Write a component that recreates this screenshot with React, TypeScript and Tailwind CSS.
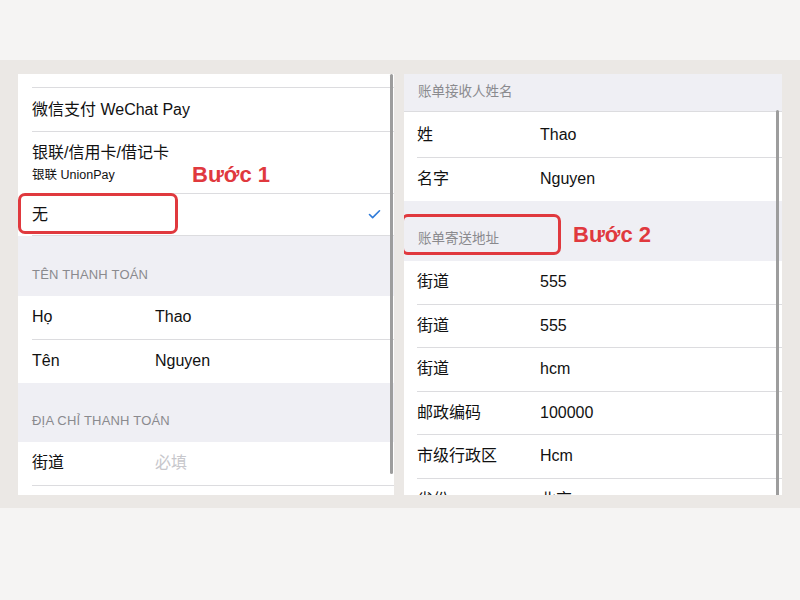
import { Check } from 'lucide-react';

const font = { fontFamily: '"Liberation Sans", "Noto Sans CJK SC", Arial, sans-serif' };

function Row({ label, value, placeholder, inset = 'pl-[14px]', valueCol = 'w-[123px]', last = false }: any) {
  return (
    <div className={`${inset} bg-white`}>
      <div className={`h-[43.5px] flex items-center text-[16px] text-[#111] ${last ? '' : 'border-b border-[#dcdcdf]'}`}>
        <span className={`${valueCol} shrink-0`}>{label}</span>
        <span className={placeholder ? 'text-[#c7c7cc]' : ''}>{value}</span>
      </div>
    </div>
  );
}

function GroupHeader({ text, h = 'h-[61px]', upper = false }: any) {
  return (
    <div className={`${h} bg-[#efeff4] flex items-end pb-[12px] px-[14px] text-[#8a8a8e] ${upper ? 'text-[13px] tracking-[0.2px]' : 'text-[13.5px]'}`}>
      {text}
    </div>
  );
}

function Step({ text, className }: { text: string; className: string }) {
  return (
    <div className={`absolute text-[22px] leading-none font-bold text-[#e0393e] ${className}`}>{text}</div>
  );
}

export default function App() {
  return (
    <div className="w-[800px] h-[600px] bg-[#f5f4f3] flex flex-col" style={font}>
      <div className="h-[60px]" />
      <div className="h-[448px] bg-[#ebe8e5] flex pt-[14px] pl-[18px] gap-[10px]">
        {/* Left panel */}
        <div className="relative w-[376px] h-[421px] bg-white overflow-hidden">
          <div className="h-[13px] bg-white" />
          <div className="pl-[14px]">
            <div className="border-t border-[#dcdcdf]" />
          </div>
          <div className="pl-[14px]">
            <div className="h-[44px] flex items-center text-[16px] text-[#111] border-b border-[#dcdcdf]">
              微信支付 WeChat Pay
            </div>
          </div>
          <div className="pl-[14px]">
            <div className="h-[62px] flex flex-col justify-center text-[#111] border-b border-[#dcdcdf]">
              <div className="text-[16px] leading-[22px]">银联/信用卡/借记卡</div>
              <div className="text-[12.5px] leading-[18px] mt-[2px]">银联 UnionPay</div>
            </div>
          </div>
          <div className="pl-[14px]">
            <div className="h-[42px] flex items-center justify-between pr-[12px] text-[16px] text-[#111] border-b border-[#dcdcdf]">
              <span>无</span>
              <Check size={15} strokeWidth={2.6} className="text-[#2f7bd9]" />
            </div>
          </div>
          <GroupHeader text="TÊN THANH TOÁN" h="h-[60px]" upper />
          <Row label="Họ" value="Thao" />
          <Row label="Tên" value="Nguyen" last />
          <GroupHeader text="ĐỊA CHỈ THANH TOÁN" h="h-[59px]" upper />
          <Row label="街道" value="必填" placeholder />
          <Row label="" value="" />

          <div className="absolute left-0 top-[119px] w-[160px] h-[41px] border-[3px] border-[#e0393e] rounded-[7px]" />
          <Step text="Bước 1" className="left-[174px] top-[90px]" />
          <div className="absolute right-[1px] top-0 w-[3px] h-[400px] bg-[#9d9d9d] rounded-full" />
        </div>

        {/* Right panel */}
        <div className="relative w-[378px] h-[421px] bg-white overflow-hidden">
          <div className="h-[38px] bg-[#efeff4] flex items-center px-[14px] text-[13.5px] text-[#8a8a8e] border-b border-[#dcdcdf]">
            账单接收人姓名
          </div>
          <div className="pt-[2px]">
            <Row label="姓" value="Thao" inset="pl-[13px]" />
            <Row label="名字" value="Nguyen" inset="pl-[13px]" last />
          </div>
          <GroupHeader text="账单寄送地址" h="h-[60px]" />
          <Row label="街道" value="555" inset="pl-[13px]" />
          <Row label="街道" value="555" inset="pl-[13px]" />
          <Row label="街道" value="hcm" inset="pl-[13px]" />
          <Row label="邮政编码" value="100000" inset="pl-[13px]" />
          <Row label="市级行政区" value="Hcm" inset="pl-[13px]" />
          <Row label="省份" value="北京" inset="pl-[13px]" />

          <div className="absolute left-[-3px] top-[140px] w-[160px] h-[41px] border-[3px] border-[#e0393e] rounded-[7px]" />
          <Step text="Bước 2" className="left-[169px] top-[150px]" />
          <div className="absolute right-[3px] top-[36px] w-[3px] h-[400px] bg-[#9d9d9d] rounded-full" />
        </div>
      </div>
      <div className="flex-1" />
    </div>
  );
}
